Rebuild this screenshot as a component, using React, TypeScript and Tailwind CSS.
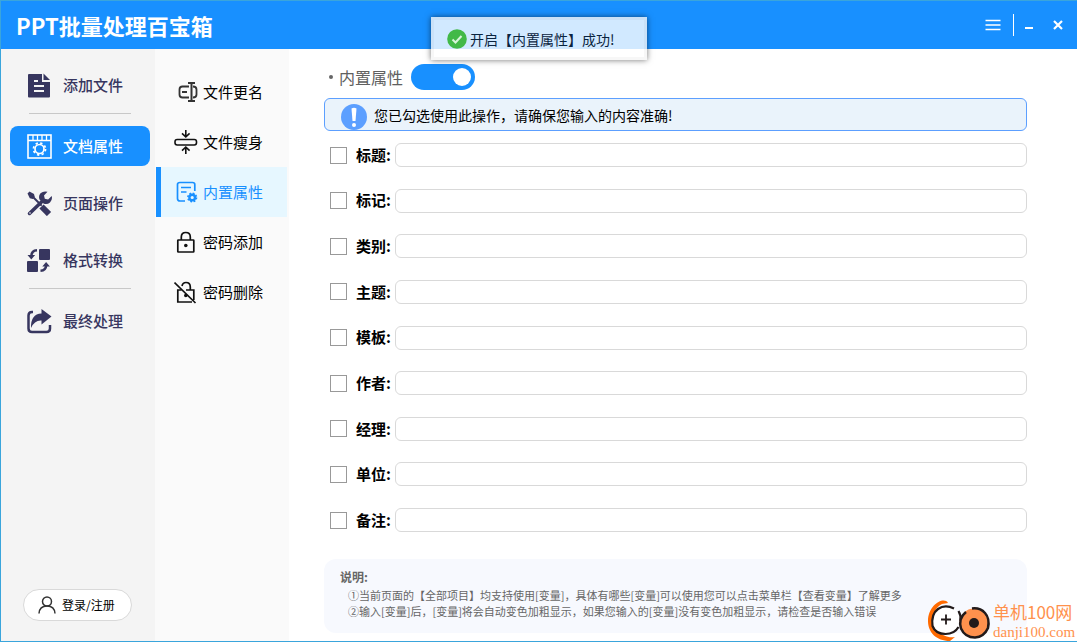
import React, { useState } from 'react'

interface MenuItem {
  label: string
  icon: React.ReactNode
}

const FileIcon = () => (
  <svg className="size-[25px] shrink-0" viewBox="0 0 25 25">
    <path fill="currentColor" d="M3 1h12v8h8v14.500q0 1-1 1H2q-1 0-1-1V2q0-1 1-1z" />
    <path fill="currentColor" d="M16.500.5 23 7h-6.500z" />
    <path stroke="#f4f4f4" strokeWidth="2" fill="none" d="M7 8h4M7 13h10M7 18h10" />
  </svg>
)

const DocumentIcon = () => (
  <svg className="size-[25px] shrink-0" viewBox="0 0 25 25" fill="none" stroke="currentColor" strokeWidth="1.600">
    <rect x="1" y="1" width="23" height="23" />
    <path strokeWidth="1.300" d="M1 6.500h23M6 1v5M10.500 1v5M15 1v5M19.500 1v5" />
    <circle cx="12.500" cy="15" r="4.500" strokeWidth="1.700" />
    <circle cx="12.500" cy="15" r="6" strokeWidth="1.800" strokeDasharray="2.300 2.412" />
  </svg>
)

const ToolsIcon = () => (
  <svg className="size-[25px] shrink-0" viewBox="0 0 25 25" fill="none" stroke="currentColor" strokeLinecap="round">
    <path fill="currentColor" stroke="none" d="M0.500 2.500 2.500.5l4.500 2.500.8 3-2 2-3-.8z" />
    <path strokeWidth="2" d="m6 6 8 8" />
    <path strokeWidth="6" strokeLinecap="butt" d="m14.500 15.500 7.500 7.500" />
    <path strokeWidth="3.500" d="M2.500 22.500 15 10.500" />
    <path fill="currentColor" stroke="none" d="M20.500.8 17 4.500l.8 3.300 3.300.8 3.600-3.600q1 4-1.700 6.500-3 2.500-6.500 1l-4-4q-1.300-3.600 1-6.200 3-2.700 7-1.500z" />
    <circle cx="3" cy="22" r=".8" fill="#f4f4f4" stroke="none" />
  </svg>
)

const ConvertIcon = () => (
  <svg className="size-[25px] shrink-0" viewBox="0 0 25 25" fill="currentColor">
    <rect x="12" y="1" width="11" height="11" rx="1" />
    <rect x="0" y="13" width="11" height="11" rx="1" />
    <path fill="none" stroke="currentColor" strokeWidth="2.500" d="M10 2.200Q4.500 2.500 4.300 8M13.500 22.800q5.500-.3 5.700-5.800" />
    <path d="M.5 7h7.600l-3.800 4.500zM15.300 18.500h7.600L19.100 14z" />
  </svg>
)

const ShareIcon = () => (
  <svg className="size-[25px] shrink-0" viewBox="0 0 25 25" fill="none">
    <path stroke="currentColor" strokeWidth="2.500" d="M6 3H5Q1.500 3 1.500 6.500v13Q1.500 23 5 23h14.500q3.500 0 3.500-3.500V16" />
    <path fill="currentColor" d="M14.500 0 24.500 7.500l-10 8V11.500q-7-.5-10.500 7.500Q3.500 5 14.500 4.500z" />
  </svg>
)

const RenameIcon = () => (
  <svg className="size-6 shrink-0" viewBox="0 0 24 24" fill="none" stroke="#333" strokeWidth="1.800">
    <path d="M15 6.500H8.500Q5.500 6.500 5.500 9.500v5q0 3 3 3H15M8 12h5M19 6.500q3.500 0 3.500 3v5q0 3-3.500 3" />
    <path strokeWidth="2" d="M17.500 3v18M14 3h7M14 21h7" />
  </svg>
)

const SlimIcon = () => (
  <svg className="size-6 shrink-0" viewBox="0 0 24 24" fill="none" stroke="#111" strokeWidth="1.600">
    <rect x="1" y="9.500" width="21.500" height="5.500" rx="2.200" />
    <path d="M11.800 0v6.500M8 3.300l3.800 3.500 3.800-3.500M11.800 24v-6.500M8 20.700l3.800-3.500 3.800 3.500" />
  </svg>
)

const PropertyIcon = () => (
  <svg className="size-6 shrink-0" viewBox="0 0 24 24" fill="none" stroke="currentColor" strokeWidth="1.700">
    <path d="M11 21H6q-2.500 0-2.500-2.500v-14Q3.500 2.500 6 2.500h12.500q2.300 0 2.300 2V11M7 7.500h10M7 12h5.500" />
    <circle cx="18.200" cy="17.500" r="2.800" strokeWidth="2.400" />
    <circle cx="18.200" cy="17.500" r="4.300" strokeWidth="1.600" strokeDasharray="1.800 1.577" />
  </svg>
)

const LockIcon = () => (
  <svg className="size-6 shrink-0" viewBox="0 0 24 24" fill="none" stroke="#111" strokeWidth="1.700">
    <rect x="3.800" y="10" width="16" height="12" rx=".5" />
    <path d="M7.300 10V7q0-4.500 4.500-4.500T16.300 7v3" />
    <circle cx="11.800" cy="15.500" r="1.800" fill="#111" stroke="none" />
  </svg>
)

const UnlockIcon = () => (
  <svg className="size-6 shrink-0" viewBox="0 0 24 24" fill="none" stroke="#111" strokeWidth="1.700">
    <path d="M7.500 10H3.800v12H18M12 10h7.800v10M8 6q.8-3.500 4-3.500 4.300 0 4.300 4.500v3" />
    <circle cx="11.800" cy="15.500" r="1.800" fill="#111" stroke="none" />
    <path d="m.5 2.500 21 20.500" />
  </svg>
)

const sideMenus: MenuItem[][] = [
  [{ label: '添加文件', icon: <FileIcon /> }],
  [
    { label: '文档属性', icon: <DocumentIcon /> },
    { label: '页面操作', icon: <ToolsIcon /> },
    { label: '格式转换', icon: <ConvertIcon /> },
  ],
  [{ label: '最终处理', icon: <ShareIcon /> }],
]

const subMenus: MenuItem[] = [
  { label: '文件更名', icon: <RenameIcon /> },
  { label: '文件瘦身', icon: <SlimIcon /> },
  { label: '内置属性', icon: <PropertyIcon /> },
  { label: '密码添加', icon: <LockIcon /> },
  { label: '密码删除', icon: <UnlockIcon /> },
]

const fields = ['标题', '标记', '类别', '主题', '模板', '作者', '经理', '单位', '备注']

const Header = () => {
  return (
    <header className="flex h-12 shrink-0 items-center justify-between bg-[#1890ff] pr-[14px] pl-[15px] text-white">
      <h1 className="text-[22px] leading-8 font-bold">PPT批量处理百宝箱</h1>
      <div className="flex items-center">
        <button aria-label="菜单">
          <svg className="h-3 w-4" viewBox="0 0 16 12" stroke="currentColor" strokeWidth="1.600">
            <path d="M.5 1.500h15M.5 6h15M.5 10.500h15" />
          </svg>
        </button>
        <div className="ml-3 h-[22px] w-px bg-white"></div>
        <button aria-label="最小化" className="ml-[11px]">
          <svg className="h-3 w-2" viewBox="0 0 8 12" fill="currentColor">
            <path d="M0 8h8v2H0z" />
          </svg>
        </button>
        <button aria-label="关闭" className="ml-5">
          <svg className="size-[10px]" viewBox="0 0 10 10" stroke="currentColor" strokeWidth="2.200">
            <path d="m1 1 8 8M9 1 1 9" />
          </svg>
        </button>
      </div>
    </header>
  )
}

const SideBar = () => {
  const [active, setActive] = useState('文档属性')
  return (
    <aside className="flex w-[154px] shrink-0 flex-col bg-[#f4f4f4] pt-4 text-[#37365f]">
      <nav className="flex flex-col px-[9px]">
        {sideMenus.map((group, index) => (
          <React.Fragment key={index}>
            {index > 0 && <hr className="mt-2 mb-3 ml-[19px] w-[102px] border-[#c8c8c8]" />}
            <div className="flex flex-col gap-[17px]">
              {group.map((item) => (
                <button
                  key={item.label}
                  onClick={() => setActive(item.label)}
                  className={`flex h-10 w-[140px] items-center gap-[11px] rounded-lg pl-[17px] text-[15px] font-medium ${
                    active === item.label ? 'bg-[#1890ff] text-white' : ''
                  }`}
                >
                  {item.icon}
                  {item.label}
                </button>
              ))}
            </div>
          </React.Fragment>
        ))}
      </nav>
      <button className="mt-auto mb-5 ml-[22px] flex h-8 w-[109px] items-center gap-[6px] rounded-full border border-[#d9d9d9] bg-white pl-[14px] text-xs text-black">
        <svg className="size-[18px]" viewBox="0 0 18 18" fill="none" stroke="#333" strokeWidth="1.500">
          <circle cx="9" cy="5.500" r="4.500" />
          <path d="M1 17.500q.5-7.500 8-7.500t8 7.500" />
        </svg>
        登录/注册
      </button>
    </aside>
  )
}

const SubMenu = () => {
  const [active, setActive] = useState('内置属性')
  return (
    <nav className="flex w-[134px] shrink-0 flex-col bg-[#fafafa] pt-[18px] pr-[2px] pl-px">
      {subMenus.map((item) => (
        <button
          key={item.label}
          onClick={() => setActive(item.label)}
          className={`flex h-[50px] items-center gap-[5px] border-l-[5px] pl-[13px] text-[15px] ${
            active === item.label ? 'border-[#1890ff] bg-[#e6f7ff] text-[#1890ff]' : 'border-transparent text-black'
          }`}
        >
          {item.icon}
          {item.label}
        </button>
      ))}
    </nav>
  )
}

const Toast = () => {
  return (
    <div
      role="status"
      className="absolute top-4 left-1/2 flex h-[43px] w-[216px] -translate-x-1/2 items-center gap-[3px] border-[3px] border-black/3 bg-white/80 pl-[13px] text-sm text-[#0a2440] shadow-[0_0_6px_rgba(0,0,0,0.55)]"
    >
      <svg className="size-5" viewBox="0 0 20 20" fill="none">
        <circle cx="10" cy="10" r="9.800" fill="#42b948" />
        <path stroke="#d8f5da" strokeWidth="2" d="m5.500 10.500 3 3 6-6.500" />
      </svg>
      开启【内置属性】成功!
    </div>
  )
}

const PropertyField = (props: { name: string }) => {
  return (
    <div className="flex h-6 items-center">
      <input
        type="checkbox"
        id={`use-${props.name}`}
        className="ml-[6px] size-[17px] shrink-0 appearance-none border border-[#999] bg-white checked:bg-[#1890ff]"
      />
      <label htmlFor={`use-${props.name}`} className="ml-[9px] w-[39px] shrink-0 text-[15px] font-bold whitespace-nowrap text-black">
        {props.name}:
      </label>
      <input
        type="text"
        aria-label={props.name}
        className="h-6 min-w-0 flex-1 rounded-md border border-[#d9d9d9] bg-white px-2 text-sm outline-none focus:border-[#1890ff]"
      />
    </div>
  )
}

const Content = () => {
  const [enabled, setEnabled] = useState(true)
  return (
    <main className="flex min-w-0 flex-1 flex-col bg-white pt-[15px] pr-[50px] pb-2 pl-[35px]">
      <div className="flex h-[26px] items-center">
        <span className="mr-[6px] ml-[5px] size-1 rounded-full bg-[#666]"></span>
        <label htmlFor="enabled" className="text-base text-[#606060]">内置属性</label>
        <input
          type="checkbox"
          role="switch"
          id="enabled"
          checked={enabled}
          onChange={() => setEnabled(!enabled)}
          className="ml-2 flex h-[26px] w-16 appearance-none items-center rounded-full bg-gray-300 px-1 before:size-[18px] before:rounded-full before:bg-white before:content-[''] checked:justify-end checked:bg-[#1890ff]"
        />
      </div>

      <div className="mt-2 flex h-[33px] items-center gap-[7px] rounded-md border border-[#5c9fff] bg-[#eaf3fb] pl-4 text-sm text-black">
        <svg className="mt-1 size-[26px]" viewBox="0 0 26 26">
          <circle cx="13" cy="13" r="13" fill="#5c9fff" />
          <path fill="#fff" d="M10.500 4.500Q13 3 15.500 4.500L14.500 17h-3z" />
          <circle cx="13" cy="21" r="2" fill="#fff" />
        </svg>
        您已勾选使用此操作，请确保您输入的内容准确!
      </div>

      <div className="mt-3 flex flex-1 flex-col justify-between">
        {fields.map((name) => (
          <PropertyField key={name} name={name} />
        ))}
      </div>

      <div className="mt-[27px] h-[74px] rounded-xl bg-[#f7f9fe] pt-[9px] pl-4 text-[11px] leading-4 text-[#666]">
        <h2 className="mb-px text-xs leading-[18px] font-bold">说明:</h2>
        <p className="pl-2">①当前页面的【全部项目】均支持使用[变量]，具体有哪些[变量]可以使用您可以点击菜单栏【查看变量】了解更多</p>
        <p className="pl-2">②输入[变量]后，[变量]将会自动变色加粗显示，如果您输入的[变量]没有变色加粗显示，请检查是否输入错误</p>
      </div>
    </main>
  )
}

const SiteMark = () => {
  return (
    <div className="absolute right-0 bottom-0 flex h-[42px] items-center text-[#ff914d]">
      <svg className="h-[42px] w-[66px]" viewBox="0 0 66 42" fill="none">
        <path fill="#ff6a00" d="M21 4C17-3 1 6 1 22c0 11 8 20 22 20l5-4C8 41-2 14 15 5z" />
        <circle cx="19" cy="21" r="14" fill="#fff" />
        <path stroke="#221a1a" strokeWidth="2.200" d="M27 9.500Q18 5 11 10T5.500 27q3 8 13 8 9 0 13-7M31.500 12q2.500 4 2 10" />
        <path stroke="#221a1a" strokeWidth="1.800" d="M19 15.500v10M14 20.500h10" />
        <circle cx="47" cy="24" r="14.500" fill="#ff914d" />
        <path stroke="#221a1a" strokeWidth="2.500" d="M45 9.500q8-1 13 4.500t3 15q-4 9-13 9.500-10 0-14-9-3-10 5-16.500" />
        <circle cx="47" cy="24" r="5" fill="#221a1a" />
      </svg>
      <div className="w-[84px] whitespace-nowrap">
        <p className="text-[17px] leading-6">单机100网</p>
        <p className="font-['Liberation_Serif',serif] text-[15px] leading-4">danji100.com</p>
      </div>
    </div>
  )
}

const App = () => {
  return (
    <div className="relative flex min-h-screen flex-col border-t border-b border-l border-[#3aa5dc] bg-white font-['Noto_Sans_CJK_SC',sans-serif]">
      <Header />
      <div className="flex flex-1">
        <SideBar />
        <SubMenu />
        <Content />
      </div>
      <Toast />
      <SiteMark />
    </div>
  )
}

export default App
